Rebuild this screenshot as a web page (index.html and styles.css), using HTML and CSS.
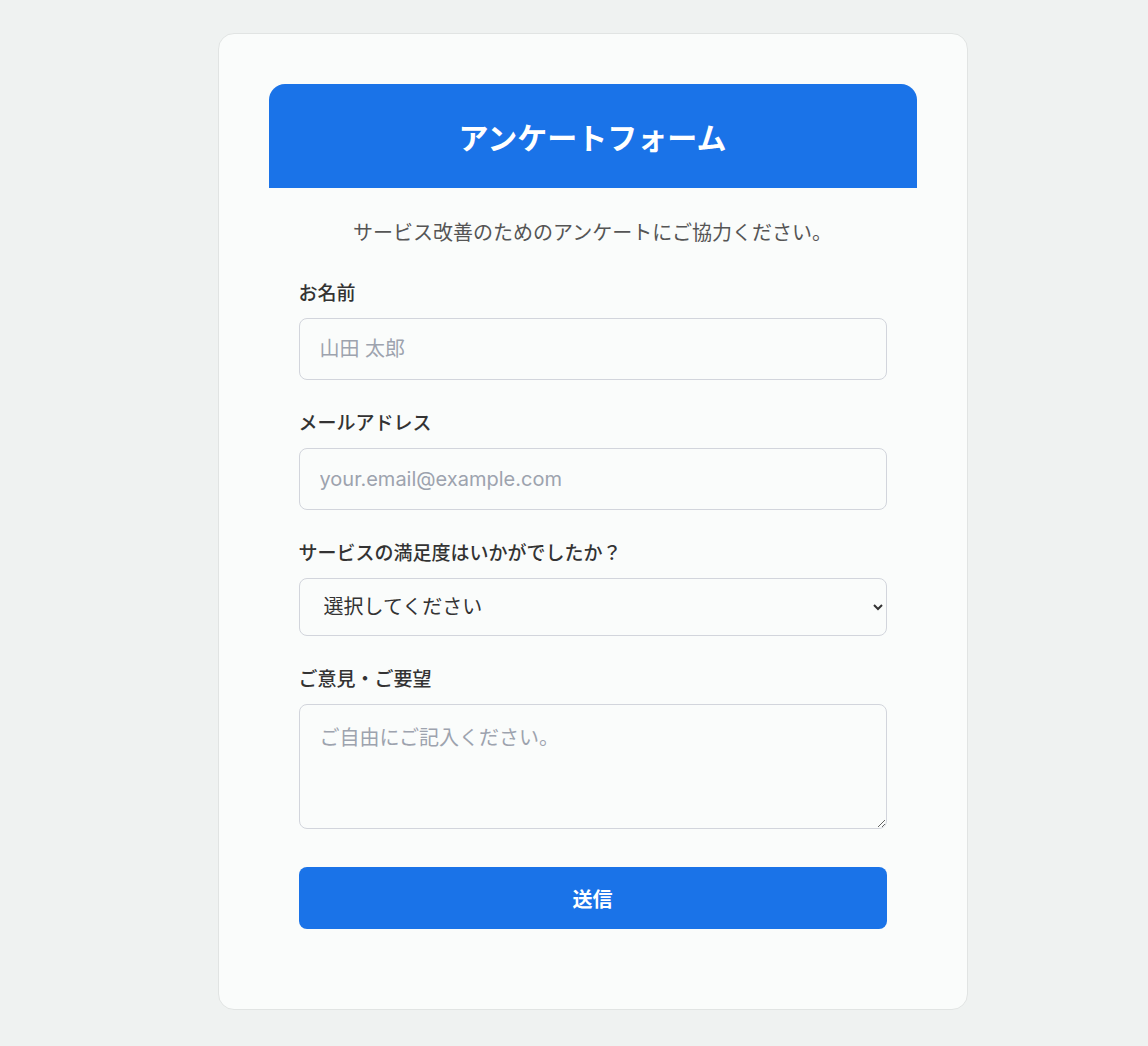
FILE: index.html
```html
<!DOCTYPE html>
<html lang="ja">
<head>
  <meta charset="UTF-8">
  <title>アンケートフォーム</title>
  <link rel="stylesheet" href="styles.css">
</head>
<body>
  <div class="page">
    <div class="card">
      <div class="header">
        <h1>アンケートフォーム</h1>
      </div>
      <form class="survey" onsubmit="return false;">
        <p class="intro">サービス改善のためのアンケートにご協力ください。</p>

        <div class="field">
          <label for="name">お名前</label>
          <input type="text" id="name" placeholder="山田 太郎">
        </div>

        <div class="field">
          <label for="email">メールアドレス</label>
          <input type="email" id="email" placeholder="your.email@example.com">
        </div>

        <div class="field">
          <label for="satisfaction">サービスの満足度はいかがでしたか？</label>
          <select id="satisfaction">
            <option value="">選択してください</option>
            <option value="5">とても満足</option>
            <option value="4">満足</option>
            <option value="3">普通</option>
            <option value="2">不満</option>
            <option value="1">とても不満</option>
          </select>
        </div>

        <div class="field">
          <label for="comment">ご意見・ご要望</label>
          <textarea id="comment" rows="4" placeholder="ご自由にご記入ください。"></textarea>
        </div>

        <button type="submit" class="submit-btn">送信</button>
      </form>
    </div>
  </div>
</body>
</html>
```

FILE: styles.css
```css
body {
  font-family: Inter, "Noto Sans CJK JP", sans-serif;
  background-color: #eff2f1;
  color: #333;
  margin: 0;
  padding: 0;
}

.page {
  padding: 33px 0 36px 37px;
}

.card {
  width: 750px;
  margin: 0 auto;
  box-sizing: border-box;
  background-color: #fafcfb;
  border: 1px solid #e1e4e3;
  border-radius: 16px;
  padding: 50px;
}

.header {
  background-color: #1a73e8;
  border-radius: 16px 16px 0 0;
  height: 104px;
  display: flex;
  justify-content: center;
  align-items: center;
}

.header h1 {
  margin: 0;
  color: #fff;
  font-size: 30px;
  font-weight: 700;
}

.survey {
  padding: 30px;
}

.intro {
  margin: 0 0 34px;
  text-align: center;
  font-size: 20px;
  line-height: 30px;
  color: #555;
}

.field {
  margin-bottom: 32px;
}

.field label {
  display: block;
  font-size: 19px;
  font-weight: 500;
  line-height: 24px;
  margin-bottom: 12px;
  color: #333;
}

.field input,
.field select,
.field textarea {
  display: block;
  width: 100%;
  box-sizing: border-box;
  font-family: inherit;
  font-size: 20px;
  color: #333;
  background-color: #fafcfb;
  border: 1px solid #d2d5dc;
  border-radius: 8px;
  padding: 0 20px;
}

.field input {
  height: 62px;
}

.field select {
  height: 58px;
  margin-top: 1px;
}

.field textarea {
  height: 125px;
  padding: 17px 20px;
  resize: vertical;
}

.field input::placeholder,
.field textarea::placeholder {
  color: #9da3ae;
}

.submit-btn {
  display: block;
  width: 100%;
  height: 62px;
  margin-top: 38px;
  border: none;
  border-radius: 8px;
  background-color: #1a73e8;
  color: #fff;
  font-family: inherit;
  font-size: 20px;
  font-weight: 700;
  cursor: pointer;
}

.submit-btn:hover {
  background-color: #1765cc;
}
```
